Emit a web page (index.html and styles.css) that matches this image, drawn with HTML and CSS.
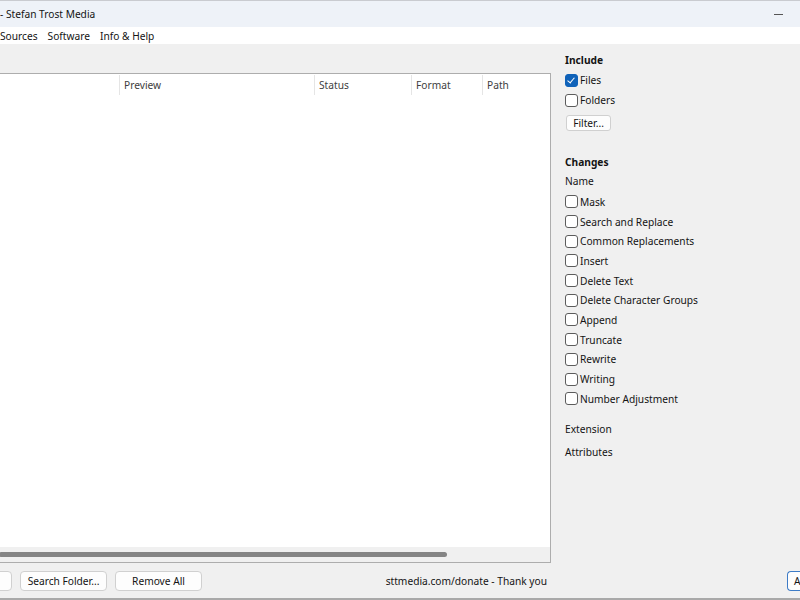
FILE: index.html
```html
<!DOCTYPE html>
<html lang="en">

<head>
    <meta charset="UTF-8">
    <title>Stefan Trost Media</title>
    <link rel="stylesheet" href="styles.css">
</head>

<body>
    <div class="window">
        <div class="titlebar">
            <span class="title">- Stefan Trost Media</span>
            <span class="min"></span>
        </div>
        <div class="menubar">
            <span>Sources</span>
            <span>Software</span>
            <span>Info &amp; Help</span>
        </div>

        <div class="main">
            <div class="list">
                <div class="list-head">
                    <div class="col c-name"></div>
                    <div class="col c-preview">Preview</div>
                    <div class="col c-status">Status</div>
                    <div class="col c-format">Format</div>
                    <div class="col c-path">Path</div>
                </div>
                <div class="list-body"></div>
                <div class="hscroll"><div class="thumb"></div></div>
            </div>

            <div class="side">
                <div class="head">Include</div>
                <label class="check"><span class="box checked"></span>Files</label>
                <label class="check"><span class="box"></span>Folders</label>
                <button class="btn small">Filter...</button>

                <div class="head changes">Changes</div>
                <div class="sub">Name</div>
                <div class="opts">
                    <label class="check"><span class="box"></span>Mask</label>
                    <label class="check"><span class="box"></span>Search and Replace</label>
                    <label class="check"><span class="box"></span>Common Replacements</label>
                    <label class="check"><span class="box"></span>Insert</label>
                    <label class="check"><span class="box"></span>Delete Text</label>
                    <label class="check"><span class="box"></span>Delete Character Groups</label>
                    <label class="check"><span class="box"></span>Append</label>
                    <label class="check"><span class="box"></span>Truncate</label>
                    <label class="check"><span class="box"></span>Rewrite</label>
                    <label class="check"><span class="box"></span>Writing</label>
                    <label class="check"><span class="box"></span>Number Adjustment</label>
                </div>
                <div class="sub ext">Extension</div>
                <div class="sub attr">Attributes</div>
            </div>
        </div>

        <div class="footer">
            <div class="footer-left">
                <button class="btn first"></button>
                <button class="btn">Search Folder...</button>
                <button class="btn">Remove All</button>
                <span class="donate">sttmedia.com/donate - Thank you</span>
            </div>
            <button class="btn default">A</button>
        </div>
    </div>
</body>

</html>
```

FILE: styles.css
```css
* {
    padding: 0;
    margin: 0;
    box-sizing: border-box;
}

body {
    width: 800px;
    height: 600px;
    overflow: hidden;
    font-family: "Noto Sans", "Lato", sans-serif;
    font-size: 10.2px;
    color: #141414;
    background: #f0f0f0;
}

.window {
    width: 800px;
    height: 600px;
    display: flex;
    flex-direction: column;
    border-top: 1px solid #c9cbd0;
    border-bottom: 2px solid #a9a9a9;
}

/* title + menu */
.titlebar {
    height: 26px;
    background: #eef2f8;
    display: flex;
    align-items: center;
    justify-content: space-between;
    padding-right: 17px;
}

.titlebar .title {
    line-height: 16px;
}

.min {
    width: 9px;
    height: 1px;
    background: #555;
}

.menubar {
    height: 17px;
    background: #fff;
    display: flex;
    align-items: center;
    gap: 10px;
}

/* list */
.main {
    flex: 1;
    display: flex;
    min-height: 0;
}

.list {
    width: 553px;
    flex-shrink: 0;
    margin-left: -2px;
    margin-top: 29px;
    border: 1px solid #adadad;
    background: #fff;
    display: flex;
    flex-direction: column;
}

.list-head {
    height: 21px;
    display: flex;
    align-items: center;
    color: #404040;
}

.list-head .col {
    height: 20px;
    line-height: 20px;
    padding-left: 4px;
    border-right: 1px solid #e5e5e5;
}

.c-name {
    width: 121px;
}

.c-preview {
    width: 195px;
}

.c-status {
    width: 97px;
}

.c-format {
    width: 71px;
}

.c-path {
    flex: 1;
    border-right: 0 !important;
}

.list-body {
    flex: 1;
}

.hscroll {
    height: 15px;
    background: #f0f0f0;
    display: flex;
    align-items: center;
}

.hscroll .thumb {
    width: 448px;
    height: 5px;
    border-radius: 3px;
    background: #858585;
}

/* right panel */
.side {
    margin-left: 14px;
    padding-top: 8px;
    display: flex;
    flex-direction: column;
    align-items: flex-start;
}

.head {
    font-weight: bold;
    line-height: 16px;
    margin-bottom: 2px;
}

.head.changes {
    margin-top: 23px;
    margin-bottom: 3px;
}

.sub {
    line-height: 16px;
}

.check {
    height: 20px;
    display: flex;
    align-items: center;
}

.opts {
    margin-top: 3px;
}

.opts .check {
    height: 19.7px;
}

.box {
    width: 13px;
    height: 13px;
    border: 1px solid #5c5c5c;
    border-radius: 3px;
    background: #fff;
    margin-right: 2px;
    position: relative;
}

.box.checked {
    background: #0f62b9;
    border-color: #0f62b9;
}

.box.checked::after {
    content: "";
    position: absolute;
    left: 3px;
    top: 1px;
    width: 3px;
    height: 6px;
    border: solid #fff;
    border-width: 0 1px 1px 0;
    transform: rotate(40deg);
}

.sub.ext {
    margin-top: 12px;
}

.sub.attr {
    margin-top: 7px;
}

/* buttons */
.btn {
    font-family: inherit;
    font-size: 10.2px;
    color: #141414;
    background: #fdfdfd;
    border: 1px solid #d0d0d0;
    border-radius: 4px;
    height: 20px;
    width: 87px;
    flex-shrink: 0;
}

.btn.small {
    width: 45px;
    height: 16px;
    line-height: 14px;
    margin-top: 5px;
    margin-left: 1px;
    border-radius: 3px;
}

.footer {
    height: 35px;
    display: flex;
    align-items: center;
}

.footer-left {
    width: 551px;
    flex-shrink: 0;
    display: flex;
    align-items: center;
    gap: 8px;
}

.btn.first {
    margin-left: -75px;
}

.donate {
    margin-left: auto;
    margin-right: 4px;
}

.btn.default {
    margin-left: 236px;
    width: 13px;
    text-align: left;
    padding-left: 6px;
    border-color: #3d7bc6;
    border-right: 0;
    border-radius: 4px 0 0 4px;
}
```
